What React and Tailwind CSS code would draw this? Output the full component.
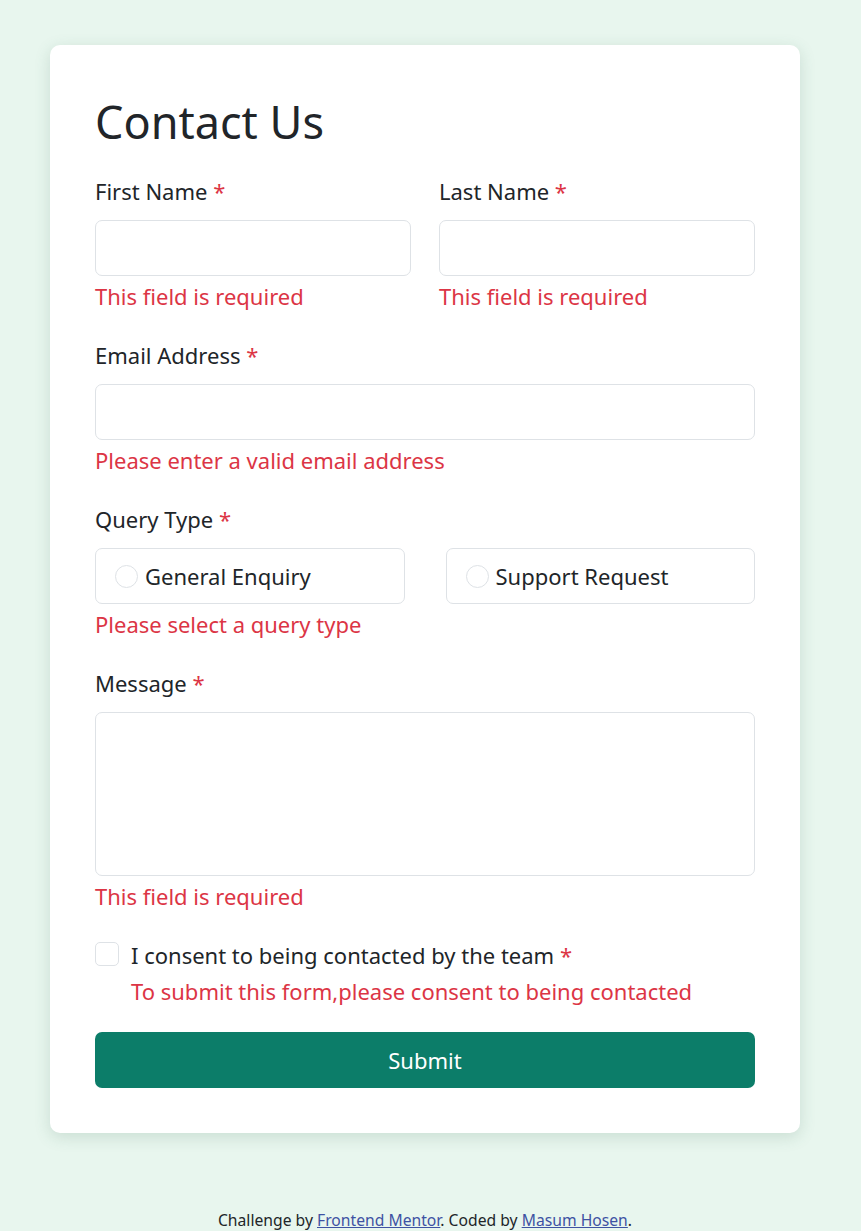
import { useState } from 'react'

const Label = ({ children, htmlFor }) => (
    <label htmlFor={htmlFor} className="block text-[22px] leading-[30px] text-[#212529] mb-[14px]">
        {children} <span className="text-[#dc3545]">*</span>
    </label>
)

const Error = ({ children }) => (
    <p className="text-[22px] leading-[30px] text-[#dc3545] mt-[5px]">{children}</p>
)

export default function App() {
    const [query, setQuery] = useState('')
    const [consent, setConsent] = useState(false)

    return (
        <div className="min-h-screen bg-[#e8f6ee] pt-[45px] pb-[20px] pr-[11px] font-['Noto_Sans',sans-serif]">
            <div className="mx-auto w-[750px] bg-white rounded-[10px] shadow-[0_4px_16px_rgba(60,110,90,0.18)] px-[45px] pt-[47px] pb-[45px]">
                <h1 className="text-[45px] leading-[60px] text-[#212529] mb-[24px]">Contact Us</h1>

                <div className="grid grid-cols-2 gap-x-[28px]">
                    <div>
                        <Label htmlFor="first">First Name</Label>
                        <input id="first" className="w-full h-[56px] border border-[#dee2e6] rounded-[7px] px-4 outline-none" />
                        <Error>This field is required</Error>
                    </div>
                    <div>
                        <Label htmlFor="last">Last Name</Label>
                        <input id="last" className="w-full h-[56px] border border-[#dee2e6] rounded-[7px] px-4 outline-none" />
                        <Error>This field is required</Error>
                    </div>
                </div>

                <div className="mt-[29px]">
                    <Label htmlFor="email">Email Address</Label>
                    <input id="email" className="w-full h-[56px] border border-[#dee2e6] rounded-[7px] px-4 outline-none" />
                    <Error>Please enter a valid email address</Error>
                </div>

                <div className="mt-[29px]">
                    <Label>Query Type</Label>
                    <div className="grid grid-cols-2 gap-x-[41px]">
                        {['General Enquiry', 'Support Request'].map(q => (
                            <label key={q} onClick={() => setQuery(q)}
                                className="h-[56px] border border-[#dee2e6] rounded-[7px] flex items-center pl-[19px] gap-[7px] cursor-pointer">
                                <span className={`w-[23px] h-[23px] rounded-full border ${query === q ? 'border-[6px] border-[#0c7d69]' : 'border-[#dee2e6]'}`} />
                                <span className="text-[22px] text-[#212529]">{q}</span>
                            </label>
                        ))}
                    </div>
                    <Error>Please select a query type</Error>
                </div>

                <div className="mt-[29px]">
                    <Label htmlFor="msg">Message</Label>
                    <textarea id="msg" className="block w-full h-[164px] border border-[#dee2e6] rounded-[7px] px-4 py-2 outline-none resize-none" />
                    <Error>This field is required</Error>
                </div>

                <div className="mt-[30px] flex gap-[12px]">
                    <button type="button" onClick={() => setConsent(!consent)}
                        className={`mt-[1px] w-[24px] h-[24px] shrink-0 rounded-[5px] border ${consent ? 'bg-[#0c7d69] border-[#0c7d69]' : 'border-[#dee2e6] bg-white'}`} />
                    <div>
                        <p className="text-[22px] leading-[30px] text-[#212529] -mt-[1px]">
                            I consent to being contacted by the team <span className="text-[#dc3545]">*</span>
                        </p>
                        <p className="text-[22px] leading-[30px] text-[#dc3545] mt-[6px]">To submit this form,please consent to being contacted</p>
                    </div>
                </div>

                <button className="mt-[26px] w-full h-[56px] rounded-[7px] bg-[#0c7d69] text-white text-[22px]">Submit</button>
            </div>

            <p className="mt-[76px] text-center text-[15.7px] text-[#212529]">
                Challenge by <a href="#" className="underline text-[#3e52a3]">Frontend Mentor</a>. Coded by <a href="#" className="underline text-[#3e52a3]">Masum Hosen</a>.
            </p>
        </div>
    )
}
